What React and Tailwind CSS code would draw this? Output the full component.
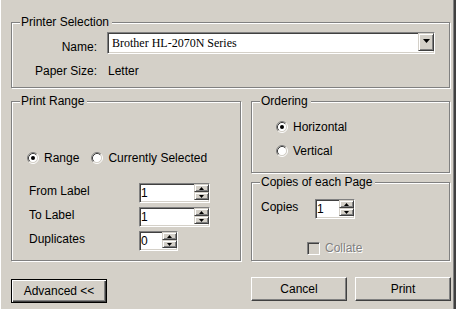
import React from "react";

const SUNKEN =
  "border border-t-[#808080] border-l-[#808080] border-b-white border-r-white shadow-[inset_1px_1px_0_#404040,inset_-1px_-1px_0_#d4d0c8]";
const SMALL_RAISED =
  "border border-t-[#d4d0c8] border-l-[#d4d0c8] border-b-[#404040] border-r-[#404040] shadow-[inset_1px_1px_0_#fff,inset_-1px_-1px_0_#808080] bg-[#d4d0c8]";

function Group({ title, className, children }) {
  return (
    <div
      className={
        "relative border border-[#808080] shadow-[inset_1px_1px_0_#fff,1px_1px_0_#fff] " +
        className
      }
    >
      <span className="absolute top-[-8px] left-[8px] bg-[#d4d0c8] pl-[1px] pr-[3px] leading-[14px] whitespace-nowrap">
        {title}
      </span>
      {children}
    </div>
  );
}

function Radio({ checked }) {
  return (
    <svg width="12" height="12" viewBox="0 0 12 12" className="shrink-0">
      <circle cx="6" cy="6" r="4.5" fill="#fff" />
      <path d="M2.11 9.89A5.5 5.5 0 0 1 9.89 2.11" fill="none" stroke="#808080" />
      <path d="M9.89 2.11A5.5 5.5 0 0 1 2.11 9.89" fill="none" stroke="#fff" />
      <path d="M2.82 9.18A4.5 4.5 0 0 1 9.18 2.82" fill="none" stroke="#404040" />
      <path d="M9.18 2.82A4.5 4.5 0 0 1 2.82 9.18" fill="none" stroke="#d4d0c8" />
      {checked && <circle cx="6" cy="6" r="2" fill="#000" />}
    </svg>
  );
}

function Arrow({ up }) {
  return (
    <svg width="5" height="3" viewBox="0 0 5 3">
      <polygon points={up ? "2.5,0 5,3 0,3" : "0,0 5,0 2.5,3"} fill="#000" />
    </svg>
  );
}

function Spinner({ value, width }) {
  return (
    <div className={"flex h-[20px] bg-white " + SUNKEN + " " + width}>
      <div className="flex-1 pl-[1px] leading-[18px]">{value}</div>
      <div className="flex w-[15px] flex-col">
        <div className={"flex h-[8px] items-center justify-center " + SMALL_RAISED}>
          <Arrow up />
        </div>
        <div className={"flex h-[8px] items-center justify-center " + SMALL_RAISED}>
          <Arrow />
        </div>
      </div>
    </div>
  );
}

function Button({ children, isDefault, className = "" }) {
  const cls = isDefault
    ? "border border-black shadow-[inset_1px_1px_0_#fff,inset_-1px_-1px_0_#404040,inset_-2px_-2px_0_#808080]"
    : "border border-t-white border-l-white border-b-[#404040] border-r-[#404040] shadow-[inset_-1px_-1px_0_#808080]";
  return (
    <div
      className={
        "flex h-[24px] w-[96px] items-center justify-center bg-[#d4d0c8] " + cls + " " + className
      }
    >
      {children}
    </div>
  );
}

export default function App() {
  return (
    <div className="flex h-[309px] w-[456px] flex-col overflow-hidden bg-[#d4d0c8] pl-[11px] pt-[22px] font-['Liberation_Sans',Arial,sans-serif] text-[12px] text-black shadow-[inset_1px_0_0_#fff,inset_-2px_0_0_#404040,inset_-3px_0_0_#808080]">
      <Group title="Printer Selection" className="h-[66px] w-[439px]">
        <div className="flex flex-col pt-[9px]">
          <div className="flex items-start">
            <div className="mt-[8px] w-[85px] text-right leading-[14px]">Name:</div>
            <div className={"ml-[10px] flex h-[22px] w-[328px] bg-white " + SUNKEN}>
              <div className="flex-1 pl-[4px] font-['Liberation_Serif',serif] text-[12px] leading-[20px]">
                Brother HL-2070N Series
              </div>
              <div className={"flex h-[18px] w-[16px] items-start justify-center pt-[5px] " + SMALL_RAISED}>
                <svg width="7" height="4" viewBox="0 0 7 4">
                  <polygon points="0,0 7,0 3.5,4" fill="#000" />
                </svg>
              </div>
            </div>
          </div>
          <div className="mt-[10px] flex leading-[14px]">
            <div className="w-[85px] text-right">Paper Size:</div>
            <div className="ml-[11px]">Letter</div>
          </div>
        </div>
      </Group>

      <div className="mt-[13px] flex gap-[10px]">
        <Group title="Print Range" className="h-[160px] w-[230px]">
          <div className="flex flex-col pl-[15px] pt-[49px]">
            <div className="flex h-[14px] items-center leading-[14px]">
              <Radio checked />
              <span className="ml-[5px]">Range</span>
              <span className="ml-[12px]">
                <Radio />
              </span>
              <span className="ml-[5px]">Currently Selected</span>
            </div>
            <div className="mt-[18px] flex flex-col gap-[4px] pl-[2px]">
              <div className="flex items-center">
                <div className="mb-[4px] w-[110px] leading-[14px]">From Label</div>
                <Spinner value="1" width="w-[71px]" />
              </div>
              <div className="flex items-center">
                <div className="mb-[4px] w-[110px] leading-[14px]">To Label</div>
                <Spinner value="1" width="w-[71px]" />
              </div>
              <div className="flex items-center">
                <div className="mb-[4px] w-[110px] leading-[14px]">Duplicates</div>
                <Spinner value="0" width="w-[39px]" />
              </div>
            </div>
          </div>
        </Group>

        <div className="flex flex-col gap-[9px]">
          <Group title="Ordering" className="h-[72px] w-[199px]">
            <div className="flex flex-col gap-[10px] pl-[24px] pt-[18px]">
              <div className="flex h-[14px] items-center leading-[14px]">
                <Radio checked />
                <span className="ml-[5px]">Horizontal</span>
              </div>
              <div className="flex h-[14px] items-center leading-[14px]">
                <Radio />
                <span className="ml-[5px]">Vertical</span>
              </div>
            </div>
          </Group>
          <Group title="Copies of each Page" className="h-[79px] w-[199px]">
            <div className="flex flex-col pl-[9px] pt-[16px]">
              <div className="flex items-center">
                <div className="mb-[4px] w-[54px] leading-[14px]">Copies</div>
                <Spinner value="1" width="w-[40px]" />
              </div>
              <div className="mt-[22px] flex items-center pl-[46px]">
                <div className={"h-[13px] w-[13px] bg-[#d4d0c8] " + SUNKEN}></div>
                <span className="ml-[5px] leading-[14px] text-[#808080] [text-shadow:1px_1px_0_#fff]">
                  Collate
                </span>
              </div>
            </div>
          </Group>
        </div>
      </div>

      <div className="mt-[16px] flex w-[440px] items-start">
        <Button isDefault className="mt-[2px]">
          {"Advanced <<"}
        </Button>
        <div className="flex-1" />
        <Button>Cancel</Button>
        <Button className="ml-[8px]">Print</Button>
      </div>
    </div>
  );
}
